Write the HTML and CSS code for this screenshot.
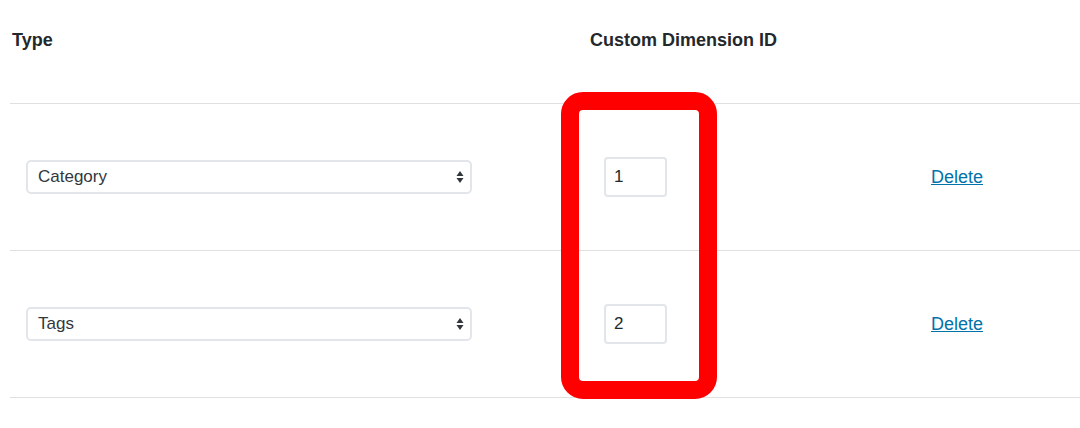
FILE: index.html
```html
<!DOCTYPE html>
<html>
<head>
<meta charset="utf-8">
<link rel="stylesheet" href="styles.css">
</head>
<body>
<div class="table">
  <div class="row head">
    <div class="cell c1"><span class="th th-type">Type</span></div>
    <div class="cell c2"><span class="th">Custom Dimension ID</span></div>
    <div class="cell c3"></div>
  </div>
  <div class="row body">
    <div class="cell c1">
      <div class="select"><span>Category</span>
        <svg class="arrows" width="8" height="14" viewBox="0 0 8 14"><path d="M4 1 L7.5 6 L0.5 6 Z M4 13 L7.5 8 L0.5 8 Z" fill="#32373c"/></svg>
      </div>
    </div>
    <div class="cell c2"><div class="input">1</div></div>
    <div class="cell c3"><a class="del" href="#">Delete</a></div>
  </div>
  <div class="row body">
    <div class="cell c1">
      <div class="select"><span>Tags</span>
        <svg class="arrows" width="8" height="14" viewBox="0 0 8 14"><path d="M4 1 L7.5 6 L0.5 6 Z M4 13 L7.5 8 L0.5 8 Z" fill="#32373c"/></svg>
      </div>
    </div>
    <div class="cell c2"><div class="input">2</div></div>
    <div class="cell c3"><a class="del" href="#">Delete</a></div>
  </div>
  <div class="rule"></div>
</div>
<div class="highlight"></div>
</body>
</html>
```
FILE: styles.css
```css
html, body {
  margin: 0;
  padding: 0;
  background: #fff;
  width: 1080px;
  height: 428px;
  overflow: hidden;
  font-family: "Liberation Sans", Arial, sans-serif;
  color: #32373c;
}
.table {
  margin-left: 10px;
  width: 1070px;
}
.row {
  display: grid;
  grid-template-columns: 580px 340px 150px;
  align-items: center;
}
.row.head {
  height: 81px;
  padding-bottom: 22px;
}
.row.body {
  height: 146px;
  border-top: 1px solid #e0e0e0;
}
.rule {
  border-top: 1px solid #e0e0e0;
}
.th {
  font-weight: bold;
  font-size: 18px;
  color: #23282d;
}
.th-type {
  margin-left: 2px;
}
.select {
  margin-left: 16px;
  height: 30px;
  border: 2px solid #e2e5ea;
  border-radius: 5px;
  display: flex;
  align-items: center;
  justify-content: space-between;
  padding: 0 6px 0 10px;
  box-sizing: content-box;
  width: 426px;
  font-size: 17px;
  color: #32373c;
}
.input {
  margin-left: 14px;
  width: 51px;
  height: 36px;
  border: 2px solid #e2e5ea;
  border-radius: 4px;
  padding-left: 8px;
  display: flex;
  align-items: center;
  font-size: 17px;
  color: #23282d;
}
.del {
  margin-left: 1px;
  font-size: 18px;
  color: #0073aa;
  text-decoration: underline;
}
.highlight {
  position: absolute;
  left: 561px;
  top: 92px;
  width: 120px;
  height: 271px;
  border: 18px solid #ff0000;
  border-radius: 22px;
}
```
